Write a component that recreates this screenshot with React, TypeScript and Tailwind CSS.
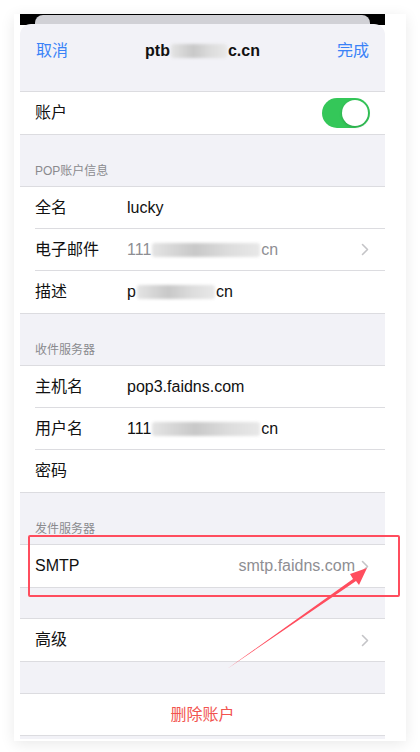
import type { ReactNode } from 'react'

const font = { fontFamily: '"Liberation Sans", "Noto Sans CJK SC", sans-serif' }

function Blur({ w }: { w: number }) {
  return (
    <span
      className="mx-[1px] inline-block h-[14px] rounded-[3px] bg-[linear-gradient(90deg,#e4e4e4,#c8c8c8_40%,#dcdcdc_70%,#e8e8e8)] align-middle blur-[1.5px]"
      style={{ width: w }}
    />
  )
}

function Chevron() {
  return (
    <svg width="8" height="13" viewBox="0 0 8 13" fill="none" className="ml-[6px]">
      <path d="M1.5 1.5L6.5 6.5L1.5 11.5" stroke="#c4c4c7" strokeWidth="1.6" strokeLinecap="round" strokeLinejoin="round" />
    </svg>
  )
}

type RowProps = {
  label: string
  children?: ReactNode
  last?: boolean
  chevron?: boolean
}

function Row({ label, children, last, chevron }: RowProps) {
  return (
    <div className="flex h-[42px] items-center bg-white pl-[15px]">
      <div className={`flex h-full flex-1 items-center pr-[16px] ${last ? '' : 'border-b border-[#dcdce0]'}`}>
        <span className="w-[92px] shrink-0 text-[16px] text-[#111]">{label}</span>
        <div className="flex flex-1 items-center text-[16px]">{children}</div>
        {chevron && <Chevron />}
      </div>
    </div>
  )
}

function Header({ title, h }: { title: string; h: string }) {
  return (
    <div className={`flex items-end border-b border-[#dcdce0] pb-[6px] pl-[15px] text-[12px] text-[#8a8a8e] ${h}`}>
      {title}
    </div>
  )
}

export default function App() {
  return (
    <div className="relative min-h-[752px] bg-white pl-[14px] pt-[14px]" style={font}>
      <div className="w-[392px] bg-white pb-[2px] pl-[6px] pr-[21px] shadow-[0_3px_14px_rgba(0,0,0,0.09)]">
        <div className="w-[365px]">
          <div className="h-[11px] bg-black pt-[1px]">
            <div className="mx-[15px] h-[10px] rounded-t-[8px] bg-[#d1d1d6]" />
          </div>
          <div className="-mt-px rounded-t-[11px] bg-[#f2f2f7]">
            <div className="flex h-[68px] items-start justify-between border-b border-[#dcdce0] px-[16px] pt-[15px]">
              <span className="text-[16px] text-[#3a82f7]">取消</span>
              <span className="flex items-center text-[16px] font-bold text-[#111]">
                ptb<Blur w={56} />c.cn
              </span>
              <span className="text-[16px] text-[#3a82f7]">完成</span>
            </div>

            <div className="flex h-[42px] items-center justify-between bg-white pl-[15px] pr-[15px]">
              <span className="text-[16px] text-[#111]">账户</span>
              <div className="flex h-[30px] w-[48px] items-center justify-end rounded-full bg-[#34c759] p-[2px]">
                <div className="h-[26px] w-[26px] rounded-full bg-white shadow-[0_1px_3px_rgba(0,0,0,0.2)]" />
              </div>
            </div>

            <div className="border-t border-[#dcdce0]" />
            <Header title="POP账户信息" h="h-[52px]" />
            <Row label="全名">
              <span className="text-[#111]">lucky</span>
            </Row>
            <Row label="电子邮件" chevron>
              <span className="flex items-center text-[#8e8e93]">
                111<Blur w={108} />cn
              </span>
            </Row>
            <Row label="描述" last>
              <span className="flex items-center text-[#111]">
                p<Blur w={78} />cn
              </span>
            </Row>

            <div className="border-t border-[#dcdce0]" />
            <Header title="收件服务器" h="h-[52px]" />
            <Row label="主机名">
              <span className="text-[#111]">pop3.faidns.com</span>
            </Row>
            <Row label="用户名">
              <span className="flex items-center text-[#111]">
                111<Blur w={108} />cn
              </span>
            </Row>
            <Row label="密码" last />

            <div className="border-t border-[#dcdce0]" />
            <Header title="发件服务器" h="h-[52px]" />
            <Row label="SMTP" chevron last>
              <span className="ml-auto text-[#8e8e93]">smtp.faidns.com</span>
            </Row>

            <div className="h-[32px] border-y border-[#dcdce0]" />
            <Row label="高级" chevron last />

            <div className="h-[33px] border-y border-[#dcdce0]" />
            <div className="flex h-[41px] items-center justify-center bg-white text-[16px] text-[#f2544f]">
              删除账户
            </div>
            <div className="h-[4px] border-t border-[#dcdce0]" />
          </div>
        </div>
      </div>

      <div className="absolute left-[28px] top-[535px] h-[62px] w-[372px] rounded-[2px] border-[2.5px] border-[#ff4d5e]" />
      <svg className="absolute left-0 top-0" width="420" height="752" viewBox="0 0 420 752">
        <polygon points="227,669 353,579 350,574 367,568 359,585 356,581" fill="#ff4d5e" />
      </svg>
    </div>
  )
}
